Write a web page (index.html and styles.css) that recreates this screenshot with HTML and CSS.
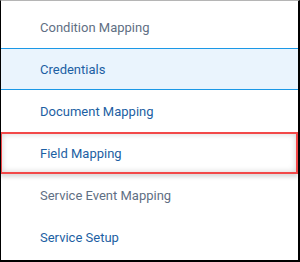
FILE: index.html
```html
<!DOCTYPE html>
<html lang="en">
<head>
  <meta charset="UTF-8" />
  <title>Settings menu</title>
  <link rel="stylesheet" href="styles.css">
</head>
<body>
  <div class="panel">
    <ul class="menu">
      <li class="item muted">Condition Mapping</li>
      <li class="item selected">Credentials</li>
      <li class="item">Document Mapping</li>
      <li class="item highlight">Field Mapping</li>
      <li class="item muted">Service Event Mapping</li>
      <li class="item">Service Setup</li>
    </ul>
  </div>
</body>
</html>
```
FILE: styles.css
```css
body {
  margin: 0;
  padding: 0;
  background-color: #fff;
  font-family: 'Roboto', 'Liberation Sans', sans-serif;
}

.panel {
  box-sizing: border-box;
  width: 300px;
  height: 262px;
  border-top: 1px solid #b5b5b5;
  border-left: 1px solid #000;
  border-right: 2px solid #000;
  border-bottom: 2px solid #000;
  overflow: hidden;
}

.menu {
  list-style: none;
  margin: 0;
  padding: 5px 0 0 0;
}

.item {
  box-sizing: border-box;
  height: 42px;
  display: flex;
  align-items: center;
  padding-left: 39px;
  font-size: 13px;
  color: #1d5fa3;
}

.muted {
  color: #5f6f84;
}

.selected {
  background-color: #eaf4fd;
  border-top: 1px solid #1b98e6;
  border-bottom: 1px solid #1b98e6;
}

.highlight {
  margin-left: -1px;
  padding-left: 38px;
  border: 2px solid #f24848;
  box-shadow: inset 0 0 6px rgba(0, 0, 0, 0.18), 0 3px 4px rgba(0, 0, 0, 0.15);
}
```
